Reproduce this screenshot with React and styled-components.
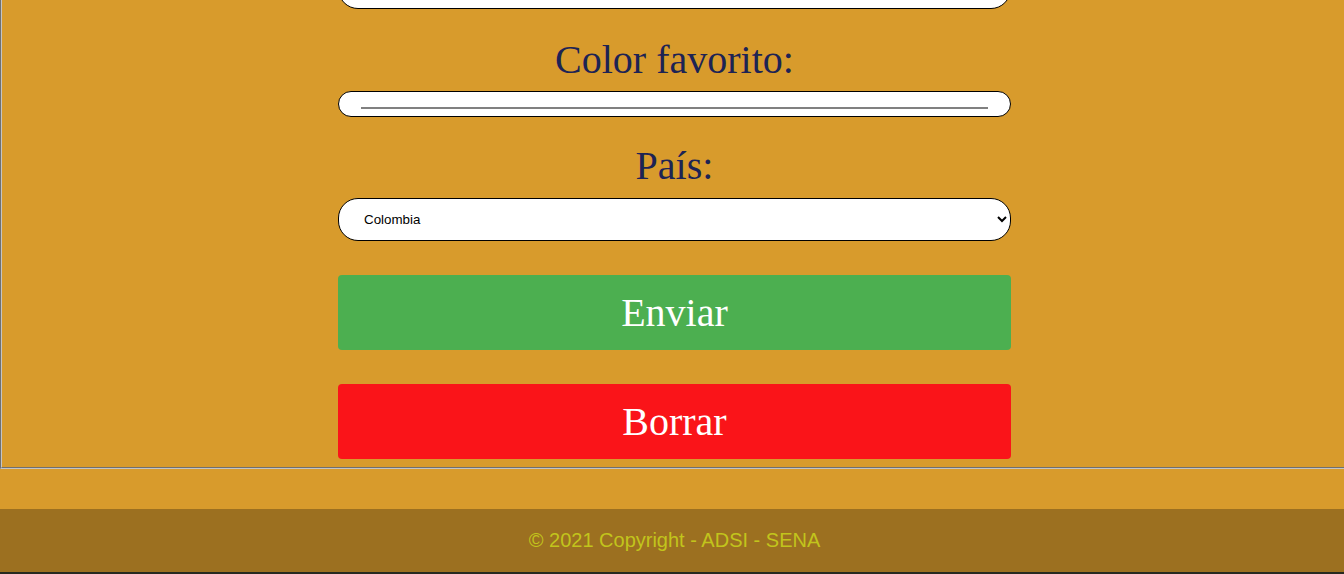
import React from 'react';
import styled, { createGlobalStyle } from 'styled-components';

const GlobalStyle = createGlobalStyle`
  html, body {
    margin: 0;
    padding: 0;
    overflow: hidden;
    background: #d89b2c;
    font-family: "Liberation Serif", "Times New Roman", serif;
  }
`;

const Page = styled.div`
  display: flex;
  flex-direction: column;
  width: 1349px;
  height: 574px;
  overflow: hidden;
`;

const Fieldset = styled.fieldset`
  box-sizing: border-box;
  width: 1349px;
  flex-shrink: 0;
  margin: -36px 0 0;
  padding: 0 0 8px;
  border: 2px groove #c4c4c4;
  border-top: none;
  display: flex;
  justify-content: center;
`;

const Form = styled.form`
  width: 673px;
  display: flex;
  flex-direction: column;
  margin: 0;
`;

const TextInput = styled.input`
  box-sizing: border-box;
  height: 43px;
  margin-top: 2px;
  border: 1px solid #000;
  border-radius: 20px;
  background: #fff;
  padding: 0 20px;
`;

const Label = styled.label`
  display: block;
  margin-top: ${({ $top }) => $top}px;
  margin-bottom: ${({ $bottom }) => $bottom}px;
  text-align: center;
  font-size: 40px;
  line-height: 46px;
  color: #1d2354;
`;

const ColorInput = styled.input`
  box-sizing: border-box;
  width: 100%;
  height: 26px;
  margin: 0;
  padding: 0;
  border: 1px solid #000;
  border-radius: 13px;
  background: #fff;
  -webkit-appearance: none;
  appearance: none;

  &::-webkit-color-swatch-wrapper {
    box-sizing: border-box;
    height: 100%;
    padding: 15px 22px 0;
    align-items: flex-start;
  }
  &::-webkit-color-swatch {
    box-sizing: border-box;
    flex: 1 1 auto;
    height: 2px;
    min-height: 2px;
    border: 1px solid #808080;
    border-radius: 0;
  }
`;

const Select = styled.select`
  box-sizing: border-box;
  height: 43px;
  width: 100%;
  border: 1px solid #000;
  border-radius: 20px;
  background: #fff;
  padding: 0 6px 0 21px;
  font-family: "Liberation Sans", Arial, sans-serif;
  font-size: 13.333px;
  color: #000;
`;

const Button = styled.button`
  height: 75px;
  margin-top: 34px;
  border: none;
  border-radius: 4px;
  background: ${({ $bg }) => $bg};
  color: #fff;
  font-family: "Liberation Serif", "Times New Roman", serif;
  font-size: 40px;
  cursor: pointer;
`;

const Footer = styled.footer`
  flex-shrink: 0;
  margin-top: 40px;
  height: 63px;
  background: #9c7020;
  border-bottom: 2px solid #262a20;
  display: flex;
  align-items: center;
  justify-content: center;
  font-family: "Liberation Sans", Arial, sans-serif;
  font-size: 20px;
  color: #c2c41c;
`;

export default function App() {
  return (
    <Page>
      <GlobalStyle />
      <Fieldset>
        <Form onSubmit={(e) => e.preventDefault()}>
          <TextInput type="text" />
          <Label $top={28} $bottom={8} htmlFor="color">Color favorito:</Label>
          <ColorInput id="color" type="color" defaultValue="#808080" />
          <Label $top={26} $bottom={9} htmlFor="pais">País:</Label>
          <Select id="pais" defaultValue="co">
            <option value="co">Colombia</option>
            <option value="pe">Perú</option>
            <option value="ec">Ecuador</option>
          </Select>
          <Button type="submit" $bg="#4caf50">Enviar</Button>
          <Button type="reset" $bg="#fa1419">Borrar</Button>
        </Form>
      </Fieldset>
      <Footer>© 2021 Copyright - ADSI - SENA</Footer>
    </Page>
  );
}
